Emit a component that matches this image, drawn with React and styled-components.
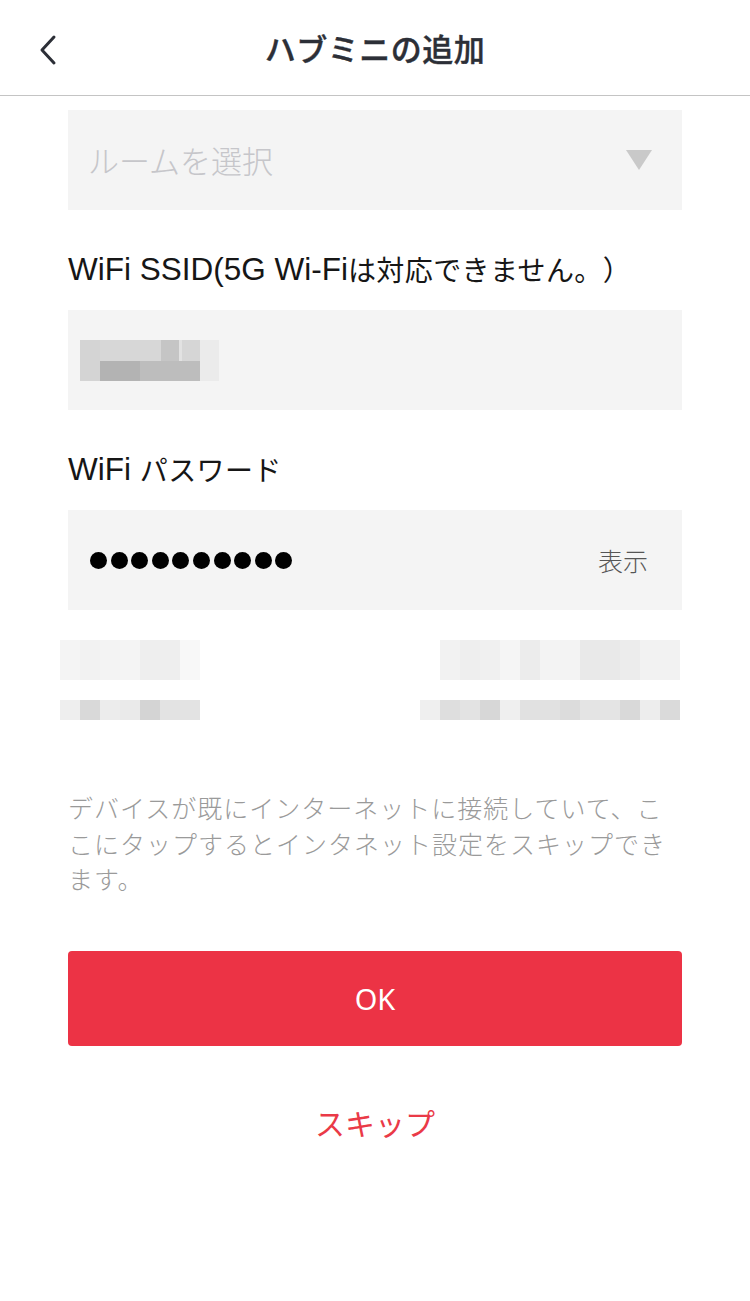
import React from "react";
import styled, { createGlobalStyle } from "styled-components";

const Global = createGlobalStyle`
  html, body { margin: 0; padding: 0; background: #fff; }
  body { font-family: "Noto Sans CJK JP", "Noto Sans", sans-serif; }
  * { box-sizing: border-box; }
`;

const Page = styled.div`
  width: 750px;
  min-height: 1301px;
  background: #fff;
  display: flex;
  flex-direction: column;
`;

const Header = styled.header`
  height: 96px;
  border-bottom: 1px solid #c4c4c4;
  display: flex;
  align-items: center;
  justify-content: center;
  position: relative;
`;

const BackButton = styled.button`
  position: absolute;
  left: 30px;
  top: 30px;
  width: 36px;
  height: 40px;
  border: 0;
  background: none;
  padding: 0;
  display: flex;
  align-items: center;
  justify-content: center;
`;

const Title = styled.h1`
  margin: 0;
  font-size: 31px;
  font-weight: 500;
  color: #2c2f37;
  letter-spacing: 0.5px;
  -webkit-text-stroke: 0.4px #2c2f37;
`;

const Body = styled.main`
  padding: 14px 68px 0;
  display: flex;
  flex-direction: column;
`;

const Field = styled.div`
  height: 100px;
  background: #f4f4f4;
  display: flex;
  align-items: center;
  justify-content: space-between;
  padding: 0 30px 0 ${(p) => p.$pl || 20}px;
`;

const Placeholder = styled.span`
  font-size: 31px;
  font-weight: 300;
  color: #c6c6ca;
  margin-top: -2px;
`;

const Triangle = styled.span`
  width: 0;
  height: 0;
  border-left: 13px solid transparent;
  border-right: 13px solid transparent;
  border-top: 20px solid #c9c9c9;
`;

const Label = styled.div`
  font-size: 28px;
  letter-spacing: 0.4px;
  text-spacing-trim: space-all;
  font-weight: 400;
  color: #161616;
  height: 100px;
  padding-top: 18px;
  display: flex;
  align-items: center;
  white-space: pre;
`;

const Latin = styled.span`
  font-family: "Liberation Sans", Arial, sans-serif;
  font-size: 31.5px;
  letter-spacing: 0;
`;

const PixelGroup = styled.div`
  display: flex;
  flex-direction: column;
  align-items: ${(p) => (p.$right ? "flex-end" : "flex-start")};
  gap: ${(p) => p.$gap || 0}px;
`;

const PixelRow = styled.div`
  display: flex;
  height: ${(p) => p.$h}px;
`;

const Cell = styled.span`
  display: block;
  height: 100%;
`;

const Dots = styled.div`
  display: flex;
  gap: 3.6px;
  padding-left: 2px;
`;

const Dot = styled.span`
  width: 17px;
  height: 17px;
  border-radius: 50%;
  background: #000;
`;

const ShowLink = styled.span`
  font-size: 25px;
  font-weight: 300;
  color: #555;
  margin-right: 4px;
`;

const BlurArea = styled.div`
  display: flex;
  justify-content: space-between;
  margin: 30px -68px 0;
  padding: 0 70px 0 60px;
`;

const Note = styled.p`
  margin: 70px 0 0;
  font-size: 25px;
  font-weight: 300;
  line-height: 35.5px;
  letter-spacing: 1px;
  color: #9a9a9a;
`;

const OkButton = styled.button`
  margin-top: 54px;
  height: 95px;
  border: 0;
  border-radius: 4px;
  background: #ec3345;
  color: #fff;
  font-family: "Noto Sans", "Noto Sans CJK JP", sans-serif;
  font-size: 29px;
  display: flex;
  align-items: center;
  justify-content: center;
`;

const Skip = styled.div`
  margin-top: 54px;
  text-align: center;
  font-size: 30px;
  color: #ea3a47;
`;

const Pixels = ({ rows, right, gap }) => (
  <PixelGroup $right={right} $gap={gap}>
    {rows.map((r, i) => (
      <PixelRow key={i} $h={r.h}>
        {r.cells.map(([w, c], j) => (
          <Cell key={j} style={{ width: w, background: c }} />
        ))}
      </PixelRow>
    ))}
  </PixelGroup>
);

const ssidRows = [
  { h: 21, cells: [[20, "#d4d4d4"], [61, "#d7d7d7"], [18, "#c5c5c5"], [3, "#e2e2e2"], [18, "#d6d6d6"], [19, "#ebebeb"]] },
  { h: 20, cells: [[20, "#d4d4d4"], [40, "#b3b3b3"], [60, "#bdbdbd"], [19, "#ebebeb"]] },
];

const leftRows = [
  { h: 40, cells: [[20, "#f4f4f4"], [20, "#f2f2f2"], [20, "#f3f3f3"], [20, "#f4f4f4"], [40, "#eeeeee"], [20, "#f8f8f8"]] },
  { h: 20, cells: [[20, "#eeeeee"], [20, "#d9d9d9"], [20, "#ececec"], [20, "#eaeaea"], [20, "#d4d4d4"], [40, "#e3e3e3"]] },
];

const rightRows = [
  { h: 40, cells: [[20, "#f2f2f2"], [20, "#eeeeee"], [20, "#f0f0f0"], [20, "#f5f5f5"], [20, "#ececec"], [40, "#f3f3f3"], [40, "#e9e9e9"], [20, "#ececec"], [40, "#f2f2f2"]] },
  { h: 20, cells: [[20, "#efefef"], [20, "#dedede"], [20, "#e3e3e3"], [20, "#d7d7d7"], [20, "#efefef"], [40, "#e1e1e1"], [20, "#dcdcdc"], [40, "#e4e4e4"], [20, "#d9d9d9"], [20, "#ededed"], [20, "#dadada"]] },
];

export default function App() {
  return (
    <Page>
      <Global />
      <Header>
        <BackButton aria-label="back">
          <svg width="24" height="32" viewBox="0 0 24 32">
            <path d="M18 3 L6 16 L18 29" fill="none" stroke="#2c2f37" strokeWidth="3" strokeLinecap="round" strokeLinejoin="round" />
          </svg>
        </BackButton>
        <Title>ハブミニの追加</Title>
      </Header>
      <Body>
        <Field>
          <Placeholder>ルームを選択</Placeholder>
          <Triangle />
        </Field>
        <Label>
          <Latin>WiFi SSID(5G Wi-Fi</Latin>は対応できません。）
        </Label>
        <Field $pl={12}>
          <Pixels rows={ssidRows} />
        </Field>
        <Label>
          <Latin>WiFi </Latin>パスワード
        </Label>
        <Field>
          <Dots>
            {Array.from({ length: 10 }).map((_, i) => (
              <Dot key={i} />
            ))}
          </Dots>
          <ShowLink>表示</ShowLink>
        </Field>
        <BlurArea>
          <Pixels rows={leftRows} gap={20} />
          <Pixels rows={rightRows} gap={20} right />
        </BlurArea>
        <Note>
          デバイスが既にインターネットに接続していて、ここにタップするとインタネット設定をスキップできます。
        </Note>
        <OkButton>OK</OkButton>
        <Skip>スキップ</Skip>
      </Body>
    </Page>
  );
}
